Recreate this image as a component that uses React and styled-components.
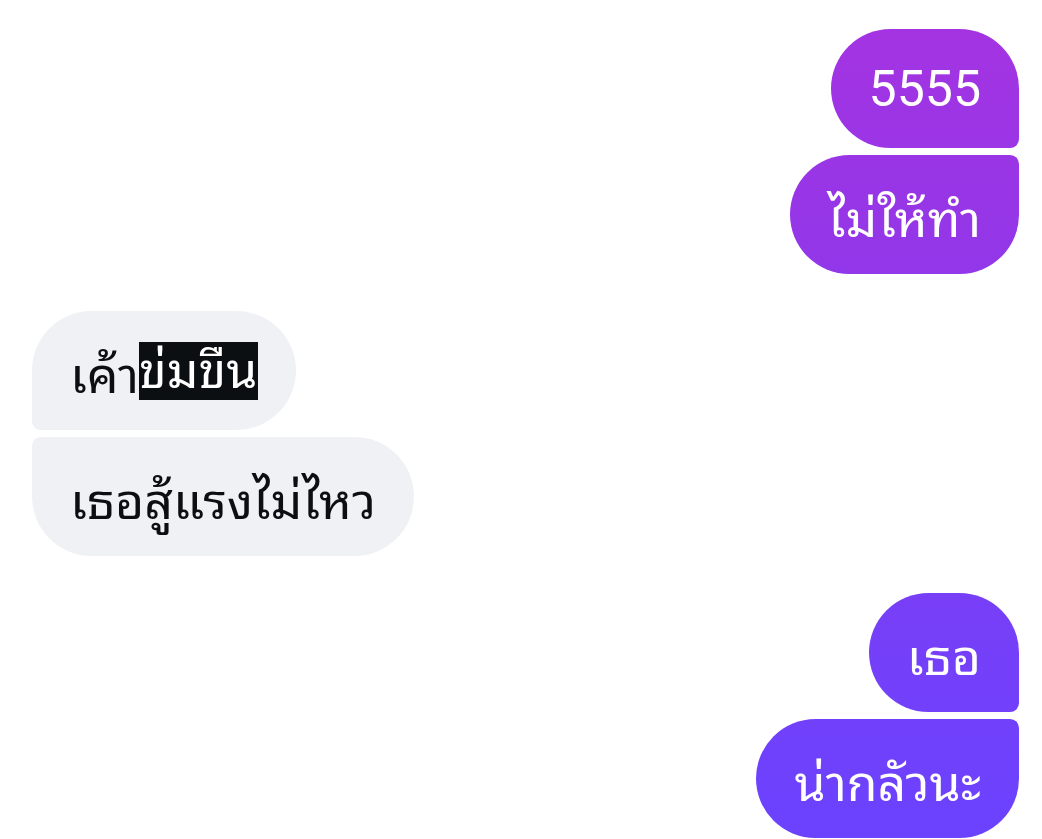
import React from 'react'
import styled, {createGlobalStyle, css} from 'styled-components'

const GlobalStyle = createGlobalStyle`
  html, body {
    margin: 0;
    padding: 0;
    background: #ffffff;
  }
  body {
    font-family: 'Roboto', 'Noto Sans Thai Looped', 'Loma', 'Garuda', 'Waree', 'Noto Sans Thai', 'Noto Sans', sans-serif;
    -webkit-font-smoothing: antialiased;
  }
`

const BIG = 60
const SMALL = 9

const Thread = styled.div`
  display: flex;
  flex-direction: column;
  gap: 37px;
  padding: 29px 23px 0 32px;
  height: 839px;
  box-sizing: border-box;
  overflow: hidden;
`

const Group = styled.div`
  display: flex;
  flex-direction: column;
  gap: 7px;
  align-items: ${p => p.$mine ? 'flex-end' : 'flex-start'};
`

const corners = (mine, pos) => {
  const r = mine
    ? (pos === 'first'
      ? `${BIG}px ${BIG}px ${SMALL}px ${BIG}px`
      : `${BIG}px ${SMALL}px ${BIG}px ${BIG}px`)
    : (pos === 'first'
      ? `${BIG}px ${BIG}px ${BIG}px ${SMALL}px`
      : `${SMALL}px ${BIG}px ${BIG}px ${BIG}px`)
  return css`border-radius: ${r};`
}

const Bubble = styled.div`
  display: flex;
  align-items: center;
  height: 119px;
  box-sizing: border-box;
  padding: 0 38px 0 38px;
  font-size: 50px;
  white-space: nowrap;
  ${p => corners(p.$mine, p.$pos)}
  ${p => p.$mine
    ? css`
      color: #ffffff;
      background: linear-gradient(180deg, #a633e1 0px, #9137e9 280px, #7a3ef6 560px, #6b42ff 839px) fixed;
    `
    : css`
      color: #0b0f12;
      background: #eff1f4;
    `}
`

const Highlight = styled.span`
  display: inline-block;
  height: 58px;
  line-height: 58px;
  background: #0b0f12;
  color: #ffffff;
`

const messages = [
  {mine: true, items: [['5555'], ['ไม่ให้ทำ']]},
  {mine: false, items: [['เค้า', 'ข่มขืน'], ['เธอสู้แรงไม่ไหว']]},
  {mine: true, items: [['เธอ'], ['น่ากลัวนะ']]},
]

export default function App() {
  return (
    <>
      <GlobalStyle />
      <Thread>
        {messages.map((group, gi) =>
          <Group key={gi} $mine={group.mine}>
            {group.items.map(([text, marked], i) =>
              <Bubble
                key={i}
                $mine={group.mine}
                $pos={i === 0 ? 'first' : 'last'}
              >
                {text}
                {marked && <Highlight>{marked}</Highlight>}
              </Bubble>
            )}
          </Group>
        )}
      </Thread>
    </>
  )
}
